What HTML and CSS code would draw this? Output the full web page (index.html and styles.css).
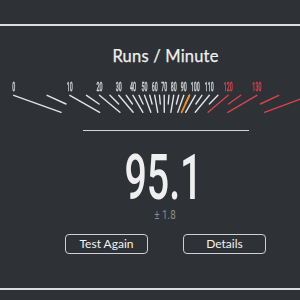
FILE: index.html
```html
<!DOCTYPE html>
<html lang="en">
<head>
<meta charset="utf-8">
<title>Runs / Minute</title>
<link rel="stylesheet" href="styles.css">
</head>
<body>
<main class="screen">
  <div class="rule"></div>
  <h1 class="title">Runs / Minute</h1>
  <svg class="gauge" viewBox="0 0 300 40" width="300" height="40" xmlns="http://www.w3.org/2000/svg"></svg>
  <section class="readout">
    <div class="divider"></div>
    <div class="value">95.1</div>
    <div class="error">± 1.8</div>
    <div class="actions">
      <button class="btn">Test Again</button>
      <button class="btn">Details</button>
    </div>
  </section>
  <div class="rule rule-bottom"></div>
</main>
<script src="gauge.js"></script>
</body>
</html>
```
FILE: styles.css
```css
* { box-sizing: border-box; margin: 0; padding: 0; }
html, body { width: 300px; height: 300px; overflow: hidden; background: #2e3135; }
body { font-family: Lato, "Open Sans", sans-serif; color: #ececec; }

.screen { padding-top: 24px; }
.rule { height: 2px; background: #dcdcdc; }
.rule-bottom { margin-top: 34px; }

.title {
  margin-top: 20px;
  padding-left: 31px;
  font-size: 16.5px;
  line-height: 20px;
  font-weight: 400;
  text-align: center;
  color: #efefef;
  letter-spacing: 0.2px;
  -webkit-text-stroke: 0.25px #efefef;
}

.gauge {
  display: block;
  margin-top: 12px;
  width: 300px;
  height: 40px;
  overflow: visible;
  opacity: 0.999;
  will-change: transform;
}
.tick { stroke: #e4e4e4; stroke-width: 1.4; stroke-linecap: round; }
.tick-red { stroke: #d9434d; }
.needle { stroke: #ef921c; stroke-width: 1.8; stroke-linecap: round; }
.label {
  font-family: Roboto, sans-serif;
  font-size: 12.7px;
  font-weight: 500;
  fill: #d2d2d2;
  stroke: #d2d2d2;
  stroke-width: 0.35;
  text-rendering: geometricPrecision;
}
.label-red { fill: #d9434d; stroke: #d9434d; }

.readout { padding-left: 31px; display: flex; flex-direction: column; align-items: center; }
.divider { margin-top: 12px; width: 166px; height: 1px; background: #d4d4d4; }
.value {
  margin-top: 21px;
  margin-left: -4px;
  font-family: Roboto, sans-serif;
  font-size: 63px;
  line-height: 52px;
  font-weight: 500;
  color: #efefef;
  transform: scaleX(0.625);
}
.error {
  margin-top: 4px;
  font-family: Roboto, sans-serif;
  font-size: 12px;
  line-height: 14px;
  color: #8c8c8c;
  transform: scaleX(0.82);
}
.actions { display: flex; gap: 35px; margin-top: 12px; }
.btn {
  width: 83px;
  height: 20px;
  border: 1.5px solid #cfcfcf;
  border-radius: 4px;
  background: transparent;
  color: #f2f2f2;
  font-family: Lato, sans-serif;
  font-size: 12px;
  line-height: 16px;
}
```
FILE: gauge.js
```js
(function () {
  var svg = document.querySelector('.gauge');
  var NS = 'http://www.w3.org/2000/svg';
  var cx = 164.5, top = 17.3, h = 54, cy = top + h;
  var majorY = 34.3, minorY = 26, labelY = 13;
  var value = 95.1;

  function line(x1, y1, x2, y2, cls) {
    var l = document.createElementNS(NS, 'line');
    l.setAttribute('x1', x1.toFixed(2));
    l.setAttribute('y1', y1);
    l.setAttribute('x2', x2.toFixed(2));
    l.setAttribute('y2', y2);
    l.setAttribute('class', cls);
    svg.appendChild(l);
  }

  function offset(v) {
    return h * Math.tan((v - 70.3) * Math.PI / 180);
  }

  for (var v = 0; v <= 140; v += 5) {
    var dx = offset(v);
    var major = v % 10 === 0;
    var y2 = major ? majorY : minorY;
    var k = (cy - y2) / h;
    var red = v >= 120;
    line(cx + dx, top, cx + dx * k, y2, 'tick' + (red ? ' tick-red' : ''));
    if (major && v <= 130) {
      var g = document.createElementNS(NS, 'g');
      g.setAttribute('transform', 'translate(' + (cx + dx).toFixed(2) + ' ' + labelY + ') scale(0.42 1)');
      var t = document.createElementNS(NS, 'text');
      t.setAttribute('text-anchor', 'middle');
      t.setAttribute('class', 'label' + (red ? ' label-red' : ''));
      t.textContent = String(v);
      g.appendChild(t);
      svg.appendChild(g);
    }
  }

  var nd = offset(value);
  var nk = (cy - majorY) / h;
  line(cx + nd, top, cx + nd * nk, majorY, 'needle');
})();
```
